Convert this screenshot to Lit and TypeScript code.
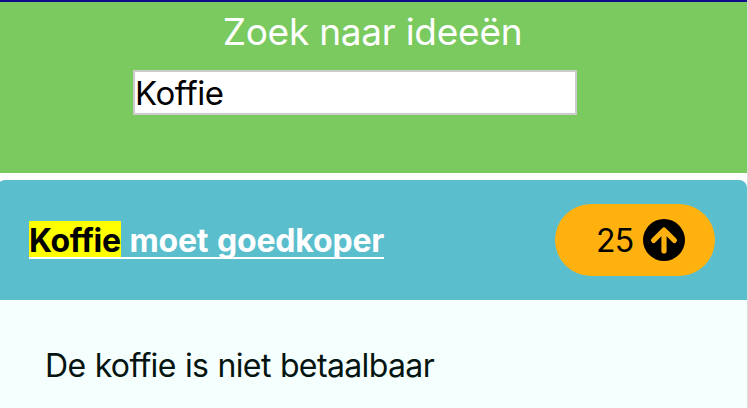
import { LitElement, html, css } from "lit";
import { customElement, property } from "lit/decorators.js";

@customElement("vote-button")
class VoteButton extends LitElement {
  @property({ type: Number }) votes = 0;

  static styles = css`
    :host {
      display: block;
    }
    .pill {
      box-sizing: border-box;
      display: flex;
      align-items: center;
      width: 160px;
      height: 72px;
      padding: 0 30px 0 41px;
      border: 0;
      border-radius: 36px;
      background: #ffb20f;
      color: #000;
      font: 400 32px/36px Inter, "Liberation Sans", sans-serif;
    }
    .count {
      width: 47px;
      padding-top: 2px;
      text-align: left;
      letter-spacing: -0.8px;
      white-space: nowrap;
    }
    .arrow {
      display: block;
      flex: none;
      width: 42px;
      height: 42px;
    }
  `;

  render() {
    return html`<button class="pill">
      <span class="count">${this.votes}</span>
      <svg class="arrow" viewBox="0 0 42 42">
        <circle cx="21" cy="21" r="21" fill="#000" />
        <path
          d="M21 32V12M10.6 21.4L21 11L31.4 21.4"
          fill="none"
          stroke="#ffb20f"
          stroke-width="5.2"
          stroke-linecap="round"
          stroke-linejoin="round"
        />
      </svg>
    </button>`;
  }
}

@customElement("app-root")
class AppRoot extends LitElement {
  static styles = css`
    :host {
      box-sizing: border-box;
      display: flex;
      flex-direction: column;
      height: 408px;
      overflow: hidden;
      border-right: 1px solid #dcdcdc;
      background: #fff;
      font-family: Inter, "Liberation Sans", sans-serif;
    }
    .search {
      box-sizing: border-box;
      flex: none;
      display: flex;
      flex-direction: column;
      align-items: center;
      height: 173px;
      padding-top: 8px;
      border-top: 2px solid #100c8c;
      background: #7aca5f;
    }
    .label {
      margin-right: 2px;
      color: #fff;
      font-size: 37px;
      line-height: 44px;
      letter-spacing: -0.25px;
      white-space: nowrap;
    }
    .field {
      box-sizing: border-box;
      width: 444px;
      height: 45px;
      margin: 16px 37px 0 0;
      padding: 0;
      border: 2px solid #ccc;
      border-radius: 0;
      outline: none;
      background: #fff;
      color: #000;
      font: 400 33px/41px Inter, "Liberation Sans", sans-serif;
      letter-spacing: -0.4px;
    }
    .head {
      box-sizing: border-box;
      flex: none;
      display: flex;
      align-items: center;
      justify-content: space-between;
      height: 120px;
      margin: 7px 0 0 -3px;
      padding: 0 32px;
      border-radius: 8px 8px 0 0;
      background: #5abecd;
    }
    .title {
      height: 36px;
      border-bottom: 2px solid #fff;
      color: #fff;
      font-size: 32px;
      font-weight: 700;
      line-height: 40px;
      letter-spacing: -0.18px;
      word-spacing: 1.3px;
      text-decoration: none;
      white-space: nowrap;
    }
    .hit {
      display: inline-block;
      height: 36px;
      background: #ff0;
      color: #000;
      letter-spacing: -0.3px;
    }
    .body {
      flex: 1;
      padding: 47px 45px 0;
      background: #f5fffe;
      color: #041410;
      font-size: 32px;
      line-height: 38px;
      letter-spacing: -0.63px;
      word-spacing: 0.8px;
      white-space: nowrap;
    }
  `;

  render() {
    return html`
      <div class="search">
        <label class="label" for="q">Zoek naar ideeën</label>
        <input class="field" id="q" type="text" value="Koffie" />
      </div>
      <div class="head">
        <a class="title"><span class="hit">Koffie</span> moet goedkoper</a>
        <vote-button .votes=${25}></vote-button>
      </div>
      <div class="body"><span class="text">De koffie is niet betaalbaar</span></div>
    `;
  }
}
